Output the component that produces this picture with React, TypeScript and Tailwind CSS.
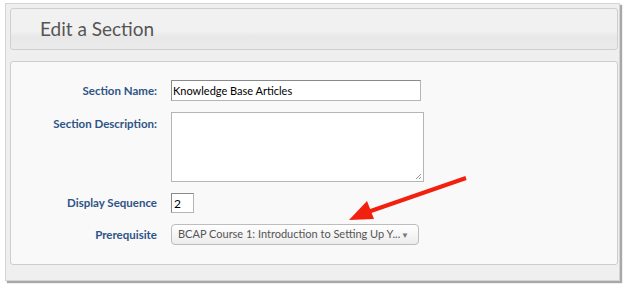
export default function App() {
  const label = "text-right text-[11.5px] font-bold text-[#2d5486] leading-none";
  return (
    <div className="relative w-[624px] h-[290px] bg-white font-['Lato',sans-serif]">
      {/* outer frame */}
      <div className="ml-[5px] pt-[3px]">
        <div className="w-[615px] h-[278px] bg-[#efefef] border border-[#d4d4d4] shadow-[2px_2px_1px_#a8a8a8] pl-[4px] pr-[1px] pt-[4px] flex flex-col">
          {/* header */}
          <div className="h-[42px] rounded-[3px] border border-[#cfcfcf] bg-[linear-gradient(#f1f1f1,#f1f1f1_55%,#e8e8e8_70%,#ebebeb)] flex items-center pl-[29px]">
            <h1 className="text-[19px] text-[#555]">Edit a Section</h1>
          </div>

          {/* content panel */}
          <div className="mt-[11px] h-[204px] rounded-[3px] border border-[#cdcdcd] bg-[#f9f9f9] pt-[18px]">
            <div className="grid grid-cols-[146px_1fr] gap-x-[14px] gap-y-[11px] items-center">
              <div className={label}>Section Name:</div>
              <input
                readOnly
                value="Knowledge Base Articles"
                className="w-[250px] h-[21px] bg-white border border-[#b5b5b5] border-t-[#8a8a8a] border-l-[#8a8a8a] px-[1px] text-[11px] text-black outline-none"
              />

              <div className={`${label} self-start pt-[6px]`}>Section Description:</div>
              <div className="relative w-[253px] h-[70px] bg-white border border-[#b5b5b5]">
                <svg className="absolute right-[1px] bottom-[1px]" width="8" height="8" viewBox="0 0 8 8">
                  <path d="M7 2L2 7M7 5L5 7" stroke="#999" strokeWidth="1" />
                </svg>
              </div>

              <div className={label}>Display Sequence</div>
              <input
                readOnly
                value="2"
                className="w-[23px] h-[20px] bg-white border border-[#b5b5b5] border-t-[#8a8a8a] border-l-[#8a8a8a] px-[2px] text-[12px] text-black outline-none"
              />

              <div className={label}>Prerequisite</div>
              <div className="w-[248px] h-[21px] rounded-[4px] border border-[#bdbdbd] bg-[linear-gradient(#ffffff,#ececec)] flex items-center pl-[6px] pr-[9px]">
                <span className="flex-1 text-[11px] text-[#555] whitespace-nowrap">BCAP Course 1: Introduction to Setting Up Y...</span>
                <span className="text-[8px] text-[#777]">▼</span>
              </div>
            </div>
          </div>
        </div>
      </div>

      {/* red annotation arrow */}
      <svg className="absolute left-0 top-0 pointer-events-none" width="624" height="290">
        <line x1="466" y1="178" x2="365" y2="213" stroke="#f2200f" strokeWidth="4" />
        <polygon points="349,220 367,201 374,219" fill="#f2200f" />
      </svg>
    </div>
  );
}
